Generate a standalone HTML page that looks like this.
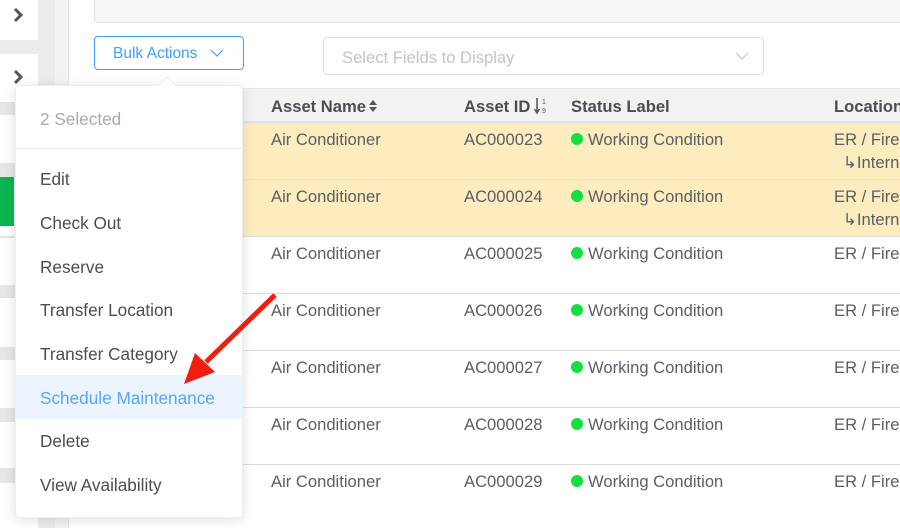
<!DOCTYPE html>
<html><head><style>
*{margin:0;padding:0;box-sizing:border-box}
body{width:900px;height:528px;overflow:hidden;background:#fff;font-family:"Liberation Sans",sans-serif;position:relative;color:#555}
.a{position:absolute}
.t{position:absolute;font-size:16.6px;white-space:nowrap;color:#5a5e66}
.mi{position:absolute;left:40px;font-size:17.2px;color:#4a4d52;white-space:nowrap}
.d{display:inline-block;width:12px;height:12px;border-radius:50%;background:#13e03c;margin-right:5px}
</style></head><body>
<div class="a" style="left:0;top:0;width:38px;height:528px;background:#fff"></div>
<div class="a" style="left:38px;top:0;width:17px;height:528px;background:#ebebeb"></div>
<div class="a" style="left:55px;top:0;width:13px;height:528px;background:#f3f3f3"></div>
<div class="a" style="left:68px;top:0;width:1px;height:528px;background:#e2e2e2"></div>
<div class="a" style="left:0;top:40px;width:38px;height:14px;background:#ebebeb"></div>
<div class="a" style="left:0;top:0;width:38px;height:40px;background:#fff;border-radius:0 0 6px 0"></div>
<svg class="a" style="left:0;top:0" width="38" height="90"><path d="M15 9 L21 15 L15 21" fill="none" stroke="#555" stroke-width="3"/><path d="M15 71 L21 77 L15 83" fill="none" stroke="#555" stroke-width="3"/></svg>
<div class="a" style="left:0;top:102px;width:16px;height:13px;background:#e6e6e6"></div>
<div class="a" style="left:0;top:163px;width:16px;height:14px;background:#e6e6e6"></div>
<div class="a" style="left:0;top:177px;width:14px;height:49px;background:#0db552"></div>
<div class="a" style="left:0;top:236px;width:16px;height:2px;background:#e6e6e6"></div>
<div class="a" style="left:0;top:285px;width:16px;height:13px;background:#e6e6e6"></div>
<div class="a" style="left:0;top:347px;width:16px;height:13px;background:#e6e6e6"></div>
<div class="a" style="left:0;top:408px;width:16px;height:14px;background:#e6e6e6"></div>
<div class="a" style="left:0;top:468px;width:16px;height:15px;background:#e6e6e6"></div>
<div class="a" style="left:94px;top:-4px;width:820px;height:27px;background:#f5f6f5;border:1px solid #e3e3e3;border-radius:4px"></div>
<div class="a" style="left:94px;top:36px;width:150px;height:34px;border:1px solid #409eff;border-radius:4px;color:#409eff;font-size:15.5px;padding:8px 0 0 18px;white-space:nowrap">Bulk Actions</div>
<svg class="a" style="left:210px;top:48px" width="14" height="10"><path d="M1 2 L7 8 L13 2" fill="none" stroke="#409eff" stroke-width="1.2"/></svg>
<div class="a" style="left:323px;top:37px;width:441px;height:38px;border:1px solid #dcdfe6;border-radius:4px;color:#c0c4cc;font-size:16.6px;padding:10px 0 0 18px">Select Fields to Display</div>
<svg class="a" style="left:735px;top:51px" width="14" height="10"><path d="M1 2 L7 8 L13 2" fill="none" stroke="#c0c4cc" stroke-width="1.2"/></svg>
<div class="a" style="left:69px;top:88px;width:831px;height:35px;background:#f2f2f2;border-top:1px solid #e6e6e6;border-bottom:2px solid #e2e2e2"></div>
<div class="t" style="left:271px;top:97px;font-weight:bold;color:#4a4d52">Asset Name</div>
<svg class="a" style="left:368px;top:99px" width="12" height="14"><path d="M1 6 L5 1 L9 6Z M1 8 L5 13 L9 8Z" fill="#555"/></svg>
<div class="t" style="left:464px;top:97px;font-weight:bold;color:#4a4d52">Asset ID</div>
<svg class="a" style="left:534px;top:97px" width="14" height="18"><path d="M3 1 V15 M0.5 12 L3 16 L5.5 12" fill="none" stroke="#555" stroke-width="1.5"/><text x="8" y="7" font-size="7" fill="#555" font-family="Liberation Sans">1</text><text x="8" y="16" font-size="7" fill="#555" font-family="Liberation Sans">9</text></svg>
<div class="t" style="left:571px;top:97px;font-weight:bold;color:#4a4d52">Status Label</div>
<div class="t" style="left:834px;top:97px;font-weight:bold;color:#4a4d52">Location</div>
<div class="a" style="left:69px;top:123px;width:831px;height:57px;background:#fdecbe;border-bottom:1px solid #e0e0e0"></div>
<div class="a" style="left:69px;top:180px;width:831px;height:57px;background:#fdecbe;border-bottom:1px solid #e0e0e0"></div>
<div class="a" style="left:243px;top:237px;width:657px;height:57px;border-bottom:1px solid #ddd"></div>
<div class="a" style="left:243px;top:294px;width:657px;height:57px;border-bottom:1px solid #ddd"></div>
<div class="a" style="left:243px;top:351px;width:657px;height:57px;border-bottom:1px solid #ddd"></div>
<div class="a" style="left:243px;top:408px;width:657px;height:57px;border-bottom:1px solid #ddd"></div>
<div class="a" style="left:243px;top:465px;width:657px;height:57px"></div>
<div class="t" style="left:271px;top:130px">Air Conditioner</div><div class="t" style="left:464px;top:130px">AC000023</div><div class="t" style="left:571px;top:130px"><span class="d"></span>Working Condition</div><div class="t" style="left:834px;top:130px">ER / Fire E</div><div class="t" style="left:843px;top:153px">↳Intern</div>
<div class="t" style="left:271px;top:187px">Air Conditioner</div><div class="t" style="left:464px;top:187px">AC000024</div><div class="t" style="left:571px;top:187px"><span class="d"></span>Working Condition</div><div class="t" style="left:834px;top:187px">ER / Fire E</div><div class="t" style="left:843px;top:210px">↳Intern</div>
<div class="t" style="left:271px;top:244px">Air Conditioner</div><div class="t" style="left:464px;top:244px">AC000025</div><div class="t" style="left:571px;top:244px"><span class="d"></span>Working Condition</div><div class="t" style="left:834px;top:244px">ER / Fire E</div>
<div class="t" style="left:271px;top:301px">Air Conditioner</div><div class="t" style="left:464px;top:301px">AC000026</div><div class="t" style="left:571px;top:301px"><span class="d"></span>Working Condition</div><div class="t" style="left:834px;top:301px">ER / Fire E</div>
<div class="t" style="left:271px;top:358px">Air Conditioner</div><div class="t" style="left:464px;top:358px">AC000027</div><div class="t" style="left:571px;top:358px"><span class="d"></span>Working Condition</div><div class="t" style="left:834px;top:358px">ER / Fire E</div>
<div class="t" style="left:271px;top:415px">Air Conditioner</div><div class="t" style="left:464px;top:415px">AC000028</div><div class="t" style="left:571px;top:415px"><span class="d"></span>Working Condition</div><div class="t" style="left:834px;top:415px">ER / Fire E</div>
<div class="t" style="left:271px;top:472px">Air Conditioner</div><div class="t" style="left:464px;top:472px">AC000029</div><div class="t" style="left:571px;top:472px"><span class="d"></span>Working Condition</div><div class="t" style="left:834px;top:472px">ER / Fire E</div>
<div class="a" style="left:15px;top:85px;width:228px;height:433px;background:#fff;border:1px solid #ebeef5;border-radius:4px;box-shadow:0 2px 12px rgba(0,0,0,.12)"></div>
<div class="a" style="left:161px;top:79px;width:12px;height:12px;background:#fff;transform:rotate(45deg);border-left:1px solid #ebeef5;border-top:1px solid #ebeef5"></div>
<div class="mi" style="top:109px;color:#aaa">2 Selected</div>
<div class="a" style="left:16px;top:148px;width:226px;height:1px;background:#e8eaef"></div>
<div class="a" style="left:16px;top:375px;width:226px;height:44px;background:#ecf5ff"></div>
<div class="mi" style="top:169px">Edit</div>
<div class="mi" style="top:213px">Check Out</div>
<div class="mi" style="top:257px">Reserve</div>
<div class="mi" style="top:300px">Transfer Location</div>
<div class="mi" style="top:344px">Transfer Category</div>
<div class="mi" style="top:388px;color:#58a6f5">Schedule Maintenance</div>
<div class="mi" style="top:431px">Delete</div>
<div class="mi" style="top:475px">View Availability</div>
<svg class="a" style="left:0;top:0" width="900" height="528"><line x1="275" y1="295" x2="206" y2="362" stroke="#f21d0c" stroke-width="5"/><polygon points="184,384 195,353 215,372" fill="#f21d0c"/></svg>
</body></html>
